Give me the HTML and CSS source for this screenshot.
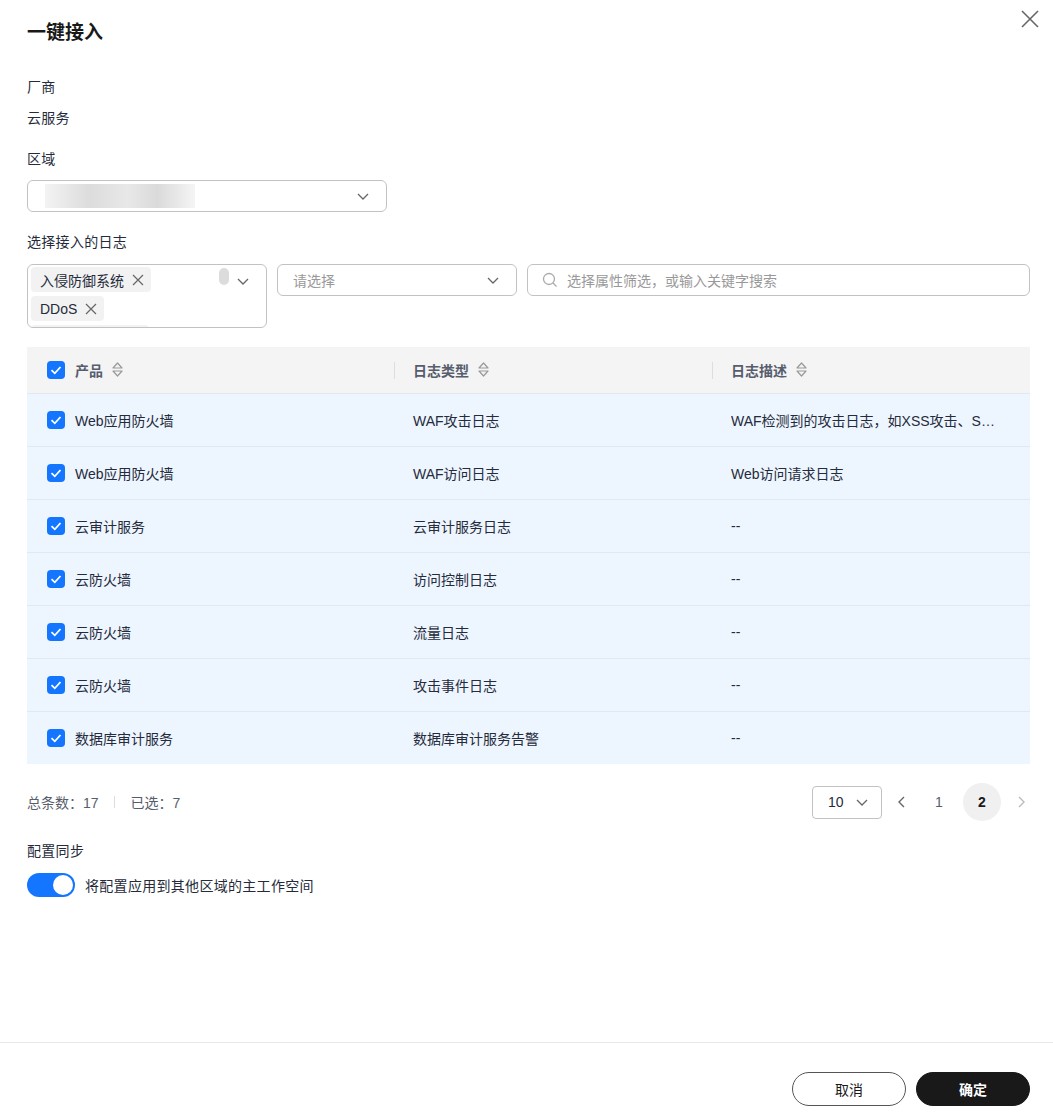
FILE: index.html
```html
<!DOCTYPE html>
<html lang="zh-CN">
<head>
    <meta charset="UTF-8">
    <meta name="viewport" content="width=device-width, initial-scale=1.0">
    <title>一键接入</title>
    <link rel="stylesheet" href="styles.css">
</head>
<body>
<div class="dialog">
    <button class="close-btn" aria-label="关闭">
        <svg width="20" height="20" viewBox="0 0 20 20"><path d="M2 2 L18 18 M18 2 L2 18" stroke="#666" stroke-width="1.6" fill="none"/></svg>
    </button>

    <div class="content">
        <h1 class="title">一键接入</h1>

        <div class="field vendor">
            <div class="label">厂商</div>
            <div class="value">云服务</div>
        </div>

        <div class="field">
            <div class="label">区域</div>
            <div class="select region">
                <span class="blur-value"></span>
                <svg class="chevron" width="14" height="14" viewBox="0 0 14 14"><path d="M2 5 L7 10 L12 5" stroke="#666" stroke-width="1.3" fill="none"/></svg>
            </div>
        </div>

        <div class="field">
            <div class="label">选择接入的日志</div>
            <div class="filters">
                <div class="multi-select">
                    <div class="tags">
                        <span class="tag">入侵防御系统 <svg class="tag-x" width="12" height="12" viewBox="0 0 12 12"><path d="M1 1 L11 11 M11 1 L1 11" stroke="#666" stroke-width="1.2"/></svg></span>
                        <span class="tag">DDoS <svg class="tag-x" width="12" height="12" viewBox="0 0 12 12"><path d="M1 1 L11 11 M11 1 L1 11" stroke="#666" stroke-width="1.2"/></svg></span>
                        <span class="tag tag-peek"></span>
                    </div>
                    <span class="scroll-thumb"></span>
                    <svg class="chevron" width="14" height="14" viewBox="0 0 14 14"><path d="M2 5 L7 10 L12 5" stroke="#666" stroke-width="1.3" fill="none"/></svg>
                </div>
                <div class="select plain">
                    <span class="placeholder">请选择</span>
                    <svg class="chevron" width="14" height="14" viewBox="0 0 14 14"><path d="M2 5 L7 10 L12 5" stroke="#666" stroke-width="1.3" fill="none"/></svg>
                </div>
                <div class="search">
                    <svg width="16" height="16" viewBox="0 0 16 16"><circle cx="7" cy="7" r="5.5" stroke="#aaa" stroke-width="1.3" fill="none"/><path d="M11 11 L14.5 14.5" stroke="#aaa" stroke-width="1.3"/></svg>
                    <span class="placeholder">选择属性筛选，或输入关键字搜索</span>
                </div>
            </div>
        </div>

        <table class="table">
            <thead>
                <tr>
                    <th class="col-product"><span class="cell-inner"><span class="checkbox"></span>产品<span class="sort"></span></span></th>
                    <th class="col-type"><span class="cell-inner">日志类型<span class="sort"></span></span></th>
                    <th class="col-desc"><span class="cell-inner">日志描述<span class="sort"></span></span></th>
                </tr>
            </thead>
            <tbody>
                <tr><td><span class="cell-inner"><span class="checkbox"></span>Web应用防火墙</span></td><td>WAF攻击日志</td><td class="desc"><div class="ellipsis">WAF检测到的攻击日志，如XSS攻击、SQL注入攻击等</div></td></tr>
                <tr><td><span class="cell-inner"><span class="checkbox"></span>Web应用防火墙</span></td><td>WAF访问日志</td><td>Web访问请求日志</td></tr>
                <tr><td><span class="cell-inner"><span class="checkbox"></span>云审计服务</span></td><td>云审计服务日志</td><td>--</td></tr>
                <tr><td><span class="cell-inner"><span class="checkbox"></span>云防火墙</span></td><td>访问控制日志</td><td>--</td></tr>
                <tr><td><span class="cell-inner"><span class="checkbox"></span>云防火墙</span></td><td>流量日志</td><td>--</td></tr>
                <tr><td><span class="cell-inner"><span class="checkbox"></span>云防火墙</span></td><td>攻击事件日志</td><td>--</td></tr>
                <tr><td><span class="cell-inner"><span class="checkbox"></span>数据库审计服务</span></td><td>数据库审计服务告警</td><td>--</td></tr>
            </tbody>
        </table>

        <div class="table-footer">
            <div class="summary">
                <span>总条数：17</span>
                <span class="divider"></span>
                <span>已选：7</span>
            </div>
            <div class="pager">
                <div class="page-size">10
                    <svg width="14" height="14" viewBox="0 0 14 14"><path d="M2 5 L7 10 L12 5" stroke="#666" stroke-width="1.3" fill="none"/></svg>
                </div>
                <span class="page-arrow"><svg width="12" height="14" viewBox="0 0 12 14"><path d="M8 2 L3 7 L8 12" stroke="#666" stroke-width="1.4" fill="none"/></svg></span>
                <span class="page-num">1</span>
                <span class="page-num current">2</span>
                <span class="page-arrow disabled"><svg width="12" height="14" viewBox="0 0 12 14"><path d="M4 2 L9 7 L4 12" stroke="#bbb" stroke-width="1.4" fill="none"/></svg></span>
            </div>
        </div>

        <div class="field sync">
            <div class="label">配置同步</div>
            <div class="switch-row">
                <span class="switch"><span class="knob"></span></span>
                <span>将配置应用到其他区域的主工作空间</span>
            </div>
        </div>
    </div>

    <div class="actions">
        <button class="btn">取消</button>
        <button class="btn btn-primary">确定</button>
    </div>
</div>
</body>
</html>
```

FILE: styles.css
```css
/* 一键接入 弹窗 */
* { box-sizing: border-box; }
body {
    margin: 0;
    font-family: "Liberation Sans", "Noto Sans CJK SC", sans-serif;
    font-size: 14px;
    color: #252b3a;
    background: #fff;
}
.dialog { position: relative; min-height: 100vh; display: flex; flex-direction: column; }
.content { flex: 1; padding: 20px 23px 0 27px; }

.close-btn {
    position: absolute; top: 9px; right: 13px;
    border: none; background: none; padding: 0; cursor: pointer; width: 20px; height: 20px;
}

.title { margin: 0; font-size: 19px; line-height: 26px; font-weight: bold; color: #191919; }

.field { margin-top: 19px; }
.field.vendor { margin-top: 30px; }
.label { line-height: 22px; color: #252b3a; letter-spacing: 0.3px; }
.value { line-height: 22px; margin-top: 9px; letter-spacing: 0.3px; }

.select {
    display: flex; align-items: center; justify-content: space-between;
    height: 32px; border: 1px solid #c2c2c2; border-radius: 6px;
    padding: 0 16px 0 15px;
}
.select.region { width: 360px; margin-top: 10px; }
.blur-value {
    width: 150px; height: 24px; margin-left: 2px;
    background: linear-gradient(90deg, #f3f3f3 0%, #dcdcdc 30%, #e8e8e8 55%, #dadada 75%, #f5f5f5 100%);
}
.placeholder { color: #999; }

.filters { display: flex; gap: 10px; margin-top: 11px; align-items: flex-start; }
.multi-select {
    position: relative; width: 240px; height: 64px;
    border: 1px solid #c2c2c2; border-radius: 6px; overflow: hidden;
    padding: 2px 0 0 3px;
}
.tags { display: flex; flex-direction: column; align-items: flex-start; gap: 4px; }
.tag {
    display: inline-flex; align-items: center; gap: 8px;
    height: 25px; padding: 0 7px 0 9px;
    background: #f2f2f2; border-radius: 4px; color: #252b3a;
}
.tag-peek { width: 118px; }
.scroll-thumb {
    position: absolute; left: 191px; top: 3px;
    width: 10px; height: 17px; background: #dcdcdc; border-radius: 5px;
}
.multi-select .chevron { position: absolute; left: 208px; top: 9px; }
.select.plain { width: 240px; }
.search {
    flex: 1; height: 32px; display: flex; align-items: center; gap: 9px;
    border: 1px solid #c2c2c2; border-radius: 6px; padding: 0 14px;
}

.table { width: 100%; border-collapse: collapse; margin-top: 19px; table-layout: fixed; }
.table th, .table td { text-align: left; padding: 0 19px; height: 53px; }
.table th { height: 46px; background: #f4f4f4; font-weight: bold; color: #575d6c; position: relative; }
.table th + th::before {
    content: ""; position: absolute; left: 0; top: 15px; height: 17px; width: 1px; background: #ddd;
}
.table .col-product { width: 367px; padding-left: 20px; }
.table td:first-child { padding-left: 20px; }
.table td.desc { padding-right: 28px; }
.table tbody tr { background: #edf5ff; }
.table tbody td { border-top: 1px solid #e2e8f0; color: #252b3a; }
.cell-inner { display: flex; align-items: center; }
.checkbox {
    width: 18px; height: 18px; border-radius: 4px; background: #1476ff; margin-right: 10px; flex: none;
    background-image: url("data:image/svg+xml,%3Csvg xmlns='http://www.w3.org/2000/svg' viewBox='0 0 18 18'%3E%3Cpath d='M4.5 9.2 L7.8 12.3 L13.5 6' stroke='white' stroke-width='1.8' fill='none'/%3E%3C/svg%3E");
}
.sort {
    width: 13px; height: 17px; margin-left: 8px;
    background-image: url("data:image/svg+xml,%3Csvg xmlns='http://www.w3.org/2000/svg' viewBox='0 0 13 17'%3E%3Cpath d='M2 7 L6.5 2 L11 7 Z M2 10 L6.5 15 L11 10 Z' stroke='%23999' stroke-width='1.2' stroke-linejoin='round' fill='none'/%3E%3C/svg%3E");
}
.ellipsis { white-space: nowrap; overflow: hidden; text-overflow: ellipsis; }

.table-footer { display: flex; justify-content: space-between; align-items: center; margin-top: 20px; height: 36px; }
.summary { display: flex; align-items: center; color: #575d6c; }
.summary .divider { width: 1px; height: 12px; background: #ddd; margin: 0 16px 0 15px; }
.pager { display: flex; align-items: center; }
.page-size {
    display: flex; align-items: center; justify-content: space-between;
    width: 70px; height: 33px; border: 1px solid #c2c2c2; border-radius: 4px;
    padding: 0 12px 0 15px; color: #252b3a; margin-right: 14px;
}
.page-arrow { width: 12px; display: flex; margin-right: 12px; }
.page-arrow.disabled { margin: 0 3px 0 14px; }
.page-num { width: 38px; height: 38px; display: flex; align-items: center; justify-content: center; border-radius: 50%; color: #575d6c; }
.page-num + .page-num { margin-left: 5px; }
.page-num.current { background: #f0f0f0; font-weight: bold; color: #191919; }

.field.sync { margin-top: 20px; }
.switch-row { display: flex; align-items: center; gap: 10px; margin-top: 11px; letter-spacing: 0.3px; }
.switch { width: 48px; height: 24px; border-radius: 12px; background: #1476ff; position: relative; flex: none; }
.knob { position: absolute; right: 2px; top: 2px; width: 20px; height: 20px; border-radius: 50%; background: #fff; }

.actions {
    border-top: 1px solid #e8e8e8; display: flex; justify-content: flex-end; gap: 10px;
    padding: 29px 23px 7px 0;
}
.btn {
    width: 114px; height: 34px; border-radius: 17px; border: 1px solid #555;
    background: #fff; color: #191919; font-family: inherit; font-size: 14px; cursor: pointer;
}
.btn-primary { background: #191919; border-color: #191919; color: #fff; font-weight: bold; }
```
